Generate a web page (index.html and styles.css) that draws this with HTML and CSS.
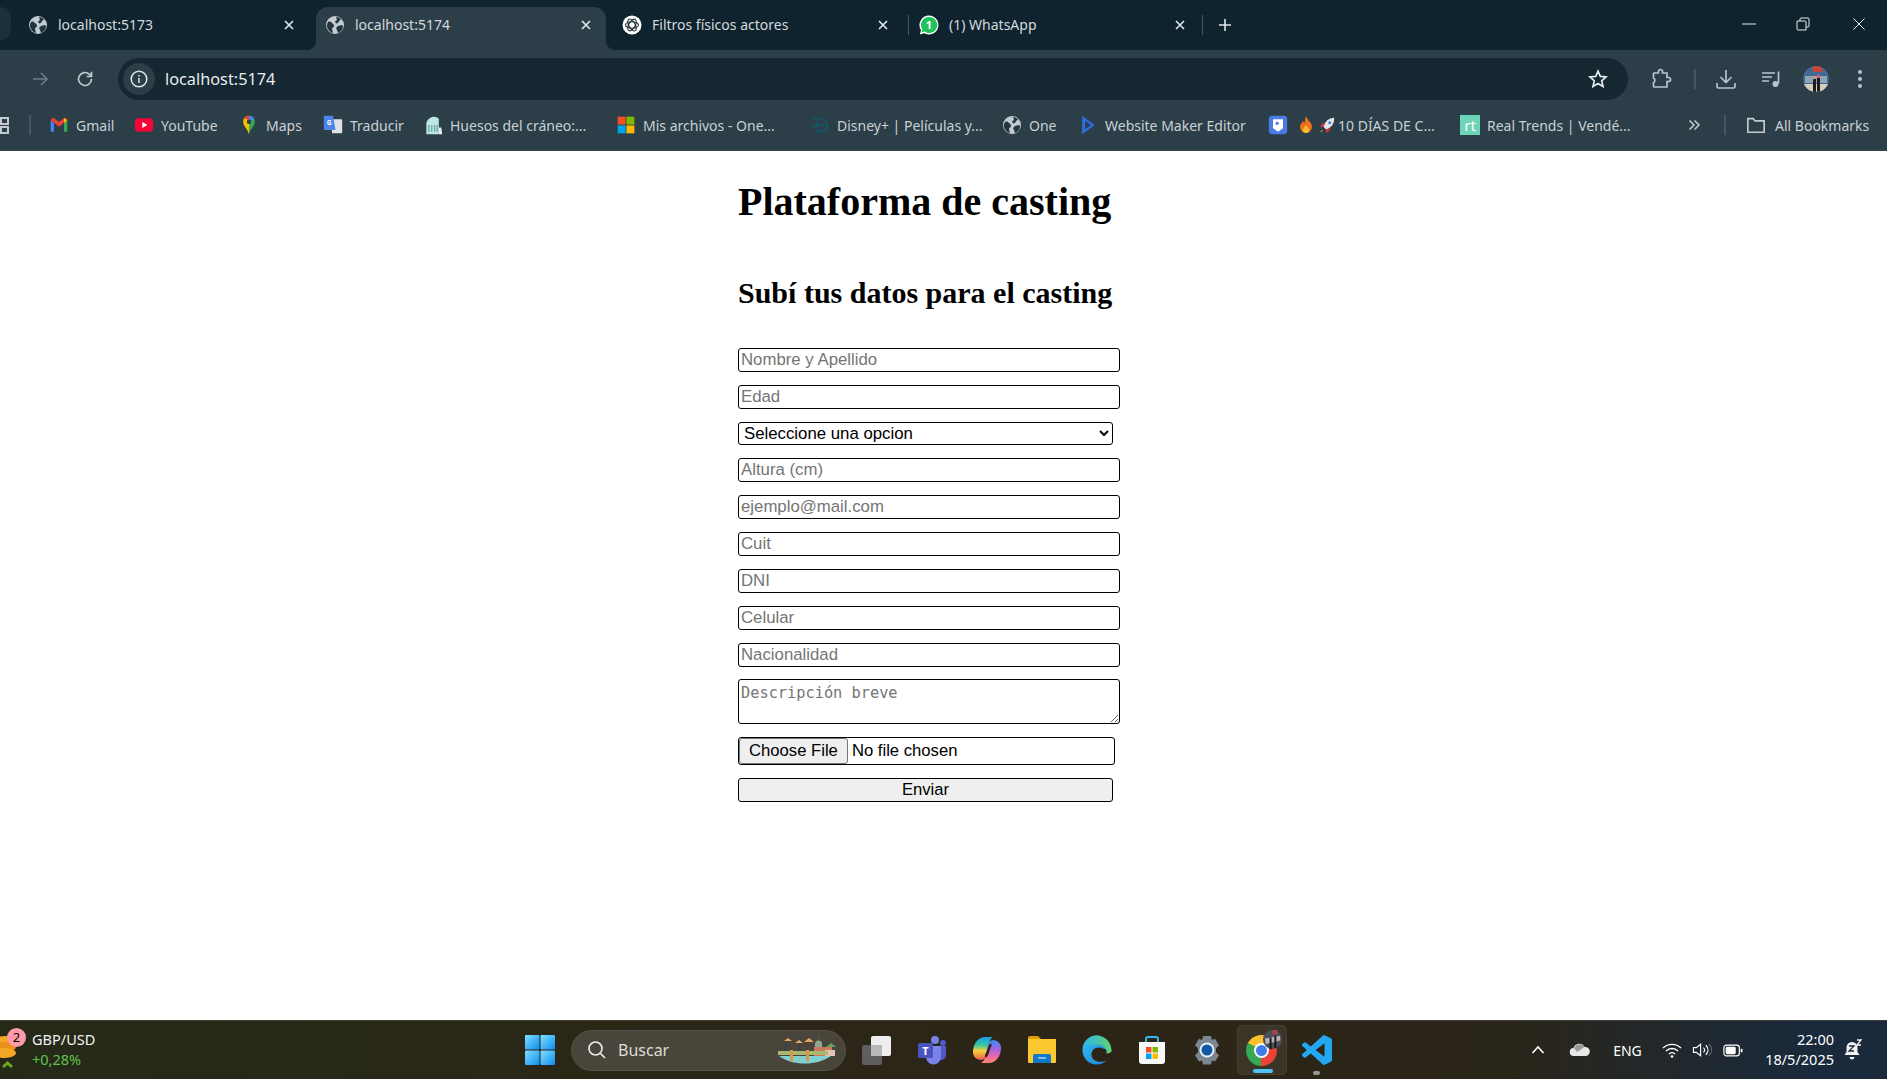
FILE: index.html
```html
<!DOCTYPE html>
<html lang="es">
<head>
<meta charset="utf-8">
<title>Plataforma de casting</title>
<link rel="stylesheet" href="styles.css">
</head>
<body>
<svg class="defs" width="0" height="0" aria-hidden="true">
  <defs>
    <symbol id="globe" viewBox="0 0 20 20">
      <circle cx="10" cy="10" r="9" fill="#c3cbd0"/>
      <path d="M3 7c2-1 3 0 4 1s2 1 2 3-2 1-2 3l1 4c-3-.6-5-3-6-6-.3-2 0-3 1-5zM11 2c2 0 4 1 5 2.500l-2 1.500-1 2-2 .5-1-2 2-1.500zM13 11l4-1 1 1c0 3-2 6-5 7l-1-3-1-2z" fill="#23363f"/>
    </symbol>
    <linearGradient id="edgeA" x1="0" y1="0" x2="1" y2="1"><stop offset="0" stop-color="#35c1f1"/><stop offset="1" stop-color="#1b7ed6"/></linearGradient>
    <linearGradient id="edgeB" x1="0" y1="0" x2="1" y2="0"><stop offset="0" stop-color="#2fb5e8"/><stop offset="1" stop-color="#5fd36f"/></linearGradient>
    <linearGradient id="copi" x1="0" y1="0" x2="0" y2="1"><stop offset="0" stop-color="#1d9be8"/><stop offset=".35" stop-color="#35c8a0"/><stop offset=".6" stop-color="#f7d03b"/><stop offset=".85" stop-color="#f28a3a"/><stop offset="1" stop-color="#ee4f5f"/></linearGradient>
    <linearGradient id="copi2" x1="0" y1="0" x2="0" y2="1"><stop offset="0" stop-color="#2f8ef0"/><stop offset=".4" stop-color="#a862e4"/><stop offset=".75" stop-color="#f06aa0"/><stop offset="1" stop-color="#f58a6a"/></linearGradient>
    <linearGradient id="win" x1="0" y1="0" x2="1" y2="1"><stop offset="0" stop-color="#7fe0ff"/><stop offset="1" stop-color="#0d8df0"/></linearGradient>
  </defs>
</svg>

<header class="tabstrip">
  <div class="tab-stub"></div>
  <div class="tabs">
    <div class="tab">
      <svg class="favicon" viewBox="0 0 20 20"><use href="#globe"/></svg>
      <span class="tab-title">localhost:5173</span>
      <svg class="tab-close" viewBox="0 0 12 12"><path d="M2 2l8 8M10 2l-8 8"/></svg>
    </div>
    <div class="tab tab-active">
      <svg class="favicon" viewBox="0 0 20 20"><use href="#globe"/></svg>
      <span class="tab-title">localhost:5174</span>
      <svg class="tab-close" viewBox="0 0 12 12"><path d="M2 2l8 8M10 2l-8 8"/></svg>
    </div>
    <div class="tab">
      <svg class="favicon" viewBox="0 0 20 20">
        <circle cx="10" cy="10" r="9.500" fill="#fff"/>
        <g fill="none" stroke="#1a2a30" stroke-width="1.100">
          <ellipse cx="10" cy="10" rx="6.500" ry="3.200"/>
          <ellipse cx="10" cy="10" rx="6.500" ry="3.200" transform="rotate(60 10 10)"/>
          <ellipse cx="10" cy="10" rx="6.500" ry="3.200" transform="rotate(120 10 10)"/>
        </g>
      </svg>
      <span class="tab-title">Filtros físicos actores</span>
      <svg class="tab-close" viewBox="0 0 12 12"><path d="M2 2l8 8M10 2l-8 8"/></svg>
    </div>
    <div class="tab tab-sep">
      <svg class="favicon" viewBox="0 0 20 20">
        <path d="M10 .5a9.500 9.500 0 0 0-8 14.600L.8 19.500l4.500-1.200A9.500 9.500 0 1 0 10 .5z" fill="#fff"/>
        <path d="M10 2a8 8 0 0 0-6.700 12.300l-.7 3 3-.8A8 8 0 1 0 10 2z" fill="#1fc35a"/>
        <text x="10" y="14" class="wa-count">1</text>
      </svg>
      <span class="tab-title">(1) WhatsApp</span>
      <svg class="tab-close" viewBox="0 0 12 12"><path d="M2 2l8 8M10 2l-8 8"/></svg>
    </div>
  </div>
  <svg class="new-tab" viewBox="0 0 14 14"><path d="M7 1v12M1 7h12"/></svg>
  <div class="win-controls">
    <svg class="wc-min" viewBox="0 0 14 12"><path d="M0 6h14"/></svg>
    <svg class="wc-max" viewBox="0 0 14 14"><path d="M1 4h8a1 1 0 0 1 1 1v8H2a1 1 0 0 1-1-1zM4 4V2a1 1 0 0 1 1-1h7a1 1 0 0 1 1 1v7a1 1 0 0 1-1 1h-2"/></svg>
    <svg class="wc-close" viewBox="0 0 12 12"><path d="M.5.5l11 11M11.500.5l-11 11"/></svg>
  </div>
</header>

<nav class="toolbar">
  <svg class="nav-back" viewBox="0 0 20 20"><path d="M17 10H3M9 4l-6 6 6 6"/></svg>
  <svg class="nav-forward" viewBox="0 0 20 20"><path d="M3 10h14M11 4l6 6-6 6"/></svg>
  <svg class="nav-reload" viewBox="0 0 20 20"><path d="M16.500 10a6.500 6.500 0 1 1-2-4.700L16.500 7.500M16.500 2.800v4.700h-4.700"/></svg>
  <div class="omnibox">
    <span class="site-info"><svg viewBox="0 0 20 20"><circle cx="10" cy="10" r="7.800"/><path d="M10 9v5M10 6v1.400"/></svg></span>
    <span class="url">localhost:5174</span>
    <svg class="star" viewBox="0 0 20 20"><path d="M10 2.200l2.300 5.200 5.700.6-4.300 3.800 1.300 5.600-5-3-5 3 1.300-5.600L2 8l5.700-.6z"/></svg>
  </div>
  <div class="tool-icons">
    <svg class="ti-ext" viewBox="0 0 22 22"><path d="M4 5h4.500V3.500a2 2 0 0 1 4 0V5H17v4.500h1.500a2 2 0 0 1 0 4H17V19H4.500a1 1 0 0 1-1-1v-3.500a2.500 2.500 0 0 0 0-4.500V6a1 1 0 0 1 .5-1z"/></svg>
    <span class="ti-sep"></span>
    <svg class="ti-dl" viewBox="0 0 22 22"><path d="M11 2v12M5.500 9l5.500 5.500L16.500 9M2 15v3.500a1.500 1.500 0 0 0 1.500 1.500h15a1.500 1.500 0 0 0 1.500-1.500V15"/></svg>
    <svg class="ti-media" viewBox="0 0 22 22"><path d="M2 5h13M2 9h10M2 13h7M18.500 3.500v12"/><circle class="ti-fill" cx="15.500" cy="16" r="3"/></svg>
    <svg class="ti-avatar" viewBox="0 0 26 26">
      <clipPath id="avc"><circle cx="13" cy="13" r="13"/></clipPath>
      <g clip-path="url(#avc)">
        <rect width="26" height="26" fill="#3f6a96"/>
        <rect y="18" width="26" height="8" fill="#d7cdb8"/>
        <rect x="2" y="10" width="22" height="7" fill="#8ea2b2"/>
        <path d="M9 0h9l2 6H10z" fill="#c8453a"/>
        <path d="M10 13h3v13h-3zM14 12h3v14h-3z" fill="#1d1a24"/>
        <circle cx="11.500" cy="11.500" r="1.800" fill="#c59a80"/>
        <circle cx="15.500" cy="10" r="1.800" fill="#c55f70"/>
      </g>
    </svg>
    <svg class="ti-menu" viewBox="0 0 6 22"><circle cx="3" cy="4" r="2"/><circle cx="3" cy="11" r="2"/><circle cx="3" cy="18" r="2"/></svg>
  </div>
</nav>

<nav class="bookmarks">
  <svg class="bm-apps" viewBox="0 0 10 20"><path d="M1 3h7v6H1zM1 12h7v6H1z"/></svg>
  <span class="bm-sep"></span>
  <a class="bm"><svg viewBox="0 0 24 24"><path d="M2 6v14h4V10z" fill="#4285f4"/><path d="M22 6v14h-4V10z" fill="#34a853"/><path d="M2 6l10 8 10-8-3-3-7 5.500L5 3z" fill="#ea4335"/><path d="M22 6l-4 4V4z" fill="#fbbc04"/></svg><span>Gmail</span></a>
  <a class="bm"><svg viewBox="0 0 24 24"><rect x="1" y="4" width="22" height="16" rx="4.500" fill="#f5053a"/><path d="M10 8.500l6 3.500-6 3.500z" fill="#fff"/></svg><span>YouTube</span></a>
  <a class="bm"><svg viewBox="0 0 24 24"><path d="M12 1C7.500 1 5 4.500 5 8c0 5 5 8 7 15z" fill="#fbbc04"/><path d="M12 1c4.500 0 7 3.500 7 7 0 5-5 8-7 15z" fill="#34a853"/><path d="M6 4c1.500-2 3.500-3 6-3v5z" fill="#ea4335"/><path d="M12 1c3 0 5 1.500 6 3.500L12 8z" fill="#4285f4"/><circle cx="12" cy="8" r="2.700" fill="#2c3e48"/></svg><span>Maps</span></a>
  <a class="bm"><svg viewBox="0 0 24 24"><path d="M9 5h13a1 1 0 0 1 1 1v15a1 1 0 0 1-1 1H11z" fill="#dfe3e6"/><path d="M2 1h10l3 17H2a1 1 0 0 1-1-1V2a1 1 0 0 1 1-1z" fill="#4d86e8"/><text x="7.500" y="12" class="bm-g">G</text></svg><span>Traducir</span></a>
  <a class="bm"><svg viewBox="0 0 24 24"><path d="M4 23V11a9 9 0 0 1 15 -6.500V23z" fill="#bfe6e4"/><path d="M7 12v8M10.500 12v8M14 12v8M17 12v8" stroke="#6aa6a6" stroke-width="1.600"/><path d="M19 15h3l1 8h-4z" fill="#e6f2f2"/></svg><span>Huesos del cráneo:...</span></a>
  <a class="bm"><svg viewBox="0 0 24 24"><rect x="2" y="2" width="9.500" height="9.500" fill="#f25022"/><rect x="12.500" y="2" width="9.500" height="9.500" fill="#7fba00"/><rect x="2" y="12.500" width="9.500" height="9.500" fill="#00a4ef"/><rect x="12.500" y="12.500" width="9.500" height="9.500" fill="#ffb900"/></svg><span>Mis archivos - One...</span></a>
  <a class="bm"><svg viewBox="0 0 24 24" fill="none" stroke="#0e5c6e" stroke-width="1.700"><path d="M3 5c8-3 18 0 18 8 0 5-6 7-11 7"/><path d="M9 7v14M2 15c3-3 8-4 18-3"/></svg><span>Disney+ | Películas y...</span></a>
  <a class="bm"><svg viewBox="0 0 20 20"><use href="#globe"/></svg><span>One</span></a>
  <a class="bm"><svg viewBox="0 0 24 24"><path d="M5 1l15 11L5 23z" fill="#2d6fe0"/><path d="M8.500 7l7 5-7 5z" fill="#2c3e48"/></svg><span>Website Maker Editor</span></a>
  <a class="bm bm-dias"><svg viewBox="0 0 24 24"><rect x="1" y="1" width="22" height="22" rx="4" fill="#4a7be4"/><path d="M6 5h12v11l-6 4-6-4z" fill="#fff"/><circle cx="11" cy="10" r="2" fill="#4a7be4"/></svg><svg class="emoji" viewBox="0 0 16 20"><path d="M8 1c1 4 6 6 6 11a6 6 0 0 1-12 0c0-3 2-4 3-6 1 1 1 2 1.500 2C7 6 7 3 8 1z" fill="#f0701f"/><path d="M8 10c.5 2 3 3 3 5a3 3 0 0 1-6 0c0-2 2-3 3-5z" fill="#fbc02d"/></svg><svg class="emoji" viewBox="0 0 20 20"><path d="M18 2c-6 0-10 4-12 10l3 3c6-2 9-6 9-13z" fill="#e8e4ea"/><circle cx="13" cy="7.500" r="1.800" fill="#3b8bd0"/><path d="M6 12H2l3-4h3zM9 15v4l4-3v-3z" fill="#d73a3a"/><path d="M5 15l-3 3 3-1z" fill="#f09a2a"/></svg><span>10 DÍAS DE C...</span></a>
  <a class="bm"><span class="rt">rt</span><span>Real Trends | Vendé...</span></a>
  <svg class="bm-more" viewBox="0 0 14 14"><path d="M2.500 2.500L7 7l-4.500 4.500M7.500 2.500L12 7l-4.500 4.500"/></svg>
  <span class="bm-sep"></span>
  <a class="bm bm-all"><svg class="bm-folder" viewBox="0 0 22 20"><path d="M2 3h6l2 2.500h10V18H2z"/></svg><span>All Bookmarks</span></a>
</nav>

<main class="page">
  <div class="content">
    <h1>Plataforma de casting</h1>
    <h2>Subí tus datos para el casting</h2>
    <form class="casting-form">
      <input class="field" type="text" placeholder="Nombre y Apellido">
      <input class="field" type="text" placeholder="Edad">
      <select class="choice"><option>Seleccione una opcion</option></select>
      <input class="field" type="text" placeholder="Altura (cm)">
      <input class="field" type="text" placeholder="ejemplo@mail.com">
      <input class="field" type="text" placeholder="Cuit">
      <input class="field" type="text" placeholder="DNI">
      <input class="field" type="text" placeholder="Celular">
      <input class="field" type="text" placeholder="Nacionalidad">
      <textarea class="area" placeholder="Descripción breve"></textarea>
      <input class="file" type="file">
      <button class="send" type="button">Enviar</button>
    </form>
  </div>
</main>

<footer class="taskbar">
  <div class="widget">
    <svg class="coin" viewBox="0 0 16 36"><ellipse cx="5" cy="8" rx="11" ry="5" fill="#f5a623"/><ellipse cx="5" cy="14" rx="11" ry="5" fill="#ec8f1c"/><ellipse cx="5" cy="20" rx="11" ry="5" fill="#f5a623"/><path d="M3 34l4.500-4 4.500 4" fill="none" stroke="#6fa51e" stroke-width="3"/></svg>
    <span class="badge">2</span>
    <div class="widget-text"><span class="pair">GBP/USD</span><span class="change">+0,28%</span></div>
  </div>
  <div class="start"><svg viewBox="0 0 30 30"><g fill="url(#win)"><rect x="0" y="0" width="14.500" height="14.500" rx="1"/><rect x="15.500" y="0" width="14.500" height="14.500" rx="1"/><rect x="0" y="15.500" width="14.500" height="14.500" rx="1"/><rect x="15.500" y="15.500" width="14.500" height="14.500" rx="1"/></g></svg></div>
  <div class="search">
    <svg class="search-icon" viewBox="0 0 20 20"><circle cx="8.500" cy="8.500" r="6.500"/><path d="M13.500 13.500L18 18"/></svg>
    <span class="search-text">Buscar</span>
    <svg class="search-art" viewBox="0 0 58 30">
      <path d="M6 6l4-3 4 3zM17 8l4-3 4 3zM26 7l5-4 5 4z" fill="#e8a765"/>
      <path d="M8 6v12M21 8v10" stroke="#33424a" stroke-width="1.200"/>
      <path d="M37 19V9a3.500 3.500 0 0 1 7 0v10z" fill="#8fa88c"/>
      <path d="M40 5V0h1v5z" fill="#4a5a52"/>
      <rect x="36" y="12" width="18" height="9" fill="#c9795e"/>
      <path d="M48 12l5-4 5 4z" fill="#5fa65a"/>
      <rect x="47" y="15" width="10" height="6" fill="#e8c3b5"/>
      <rect x="0" y="16" width="50" height="4" fill="#a9b86f"/>
      <path d="M1 21c13 10 38 10 52 0z" fill="#7fd0cf"/>
      <rect x="12" y="15" width="3" height="11" fill="#d8964e"/>
      <rect x="28" y="15" width="3" height="11" fill="#d8964e"/>
    </svg>
  </div>
  <div class="apps">
    <span class="app"><svg viewBox="0 0 30 30"><rect x="9" y="1" width="20" height="20" rx="2" fill="#eee"/><rect x="0" y="10" width="20" height="20" rx="2" fill="#5f5f5f"/><rect x="9" y="10" width="11" height="11" fill="#b9b9b9"/></svg></span>
    <span class="app"><svg viewBox="0 0 30 30"><circle cx="18" cy="5" r="4" fill="#7b83eb"/><circle cx="26" cy="8" r="3" fill="#5059c9"/><path d="M20 11h9v9a5 5 0 0 1-8 4z" fill="#5059c9"/><path d="M9 11h15v11a7.500 7.500 0 0 1-15 0z" fill="#7b83eb"/><rect x="1" y="8" width="15" height="15" rx="1.500" fill="#4b53bc"/><text x="8.500" y="20" class="teams-t">T</text></svg></span>
    <span class="app"><svg viewBox="0 0 30 30"><path d="M21 2c-3 1-5 8-6 14-1 6-3 9-6 9-4 0-8-3-8-8C1 9 6 2 13 2z" fill="url(#copi)"/><path d="M9 28c3-1 5-8 6-14 1-6 3-9 6-9 4 0 8 3 8 8 0 8-5 15-12 15z" fill="url(#copi2)"/><path d="M18.500 10c-2 3-2 7-4.500 11" fill="none" stroke="#2b2517" stroke-width="2.500" stroke-linecap="round"/></svg></span>
    <span class="app"><svg viewBox="0 0 30 30"><path d="M1 3a2 2 0 0 1 2-2h8l3 3h-13z" fill="#d9a008"/><path d="M1 4h28v23a1 1 0 0 1-1 1H2a1 1 0 0 1-1-1z" fill="#fdc82f"/><path d="M6 28v-7a2 2 0 0 1 2-2h14a2 2 0 0 1 2 2v7z" fill="#0f78c9"/><path d="M11 23h8" stroke="#bfe3ff" stroke-width="1.300"/></svg></span>
    <span class="app"><svg viewBox="0 0 30 30"><path d="M29.500 17C29 7 22 .5 14.500.5 6.500.5.500 7 .5 15c0 8 6 14.500 14 14.500 4 0 7.500-1.500 10-4-6 3-15 1-15-6 0-4 3-7 7-7 3 0 5 1 13 4.500z" fill="url(#edgeA)"/><path d="M1 12C3 5 8 .5 14.500.5c8 0 15 6.500 15 15 0 2-2 3-5 3 1-5-3-9-9-9-6 0-12 1-14.500 2.500z" fill="url(#edgeB)"/></svg></span>
    <span class="app"><svg viewBox="0 0 30 30"><path d="M9 8V4a2 2 0 0 1 2-2h8a2 2 0 0 1 2 2v4" fill="none" stroke="#35b6f0" stroke-width="2"/><path d="M2 7h26v19a3 3 0 0 1-3 3H5a3 3 0 0 1-3-3z" fill="#f8f8f8"/><rect x="9" y="12" width="5.500" height="5.500" fill="#f25022"/><rect x="15.500" y="12" width="5.500" height="5.500" fill="#7fba00"/><rect x="9" y="18.500" width="5.500" height="5.500" fill="#00a4ef"/><rect x="15.500" y="18.500" width="5.500" height="5.500" fill="#ffb900"/></svg></span>
    <span class="app"><svg viewBox="0 0 30 30"><path d="M11 1h8l1 4 3-1.200 4 6.400-3 3v4l3 3-4 6.400-3-1.200-1 4h-8l-1-4-3 1.200-4-6.400 3-3v-4l-3-3 4-6.400L10 5z" fill="#7b8790"/><circle cx="15" cy="15" r="7.500" fill="#e8eef2"/><circle cx="15" cy="15" r="5.500" fill="#0f5aa8"/></svg></span>
    <span class="app app-active">
      <span class="chrome"><span class="chrome-core"></span></span>
      <svg class="chrome-av" viewBox="0 0 20 20"><circle cx="10" cy="10" r="10" fill="#4a4f58"/><path d="M2 9l16-3v5L3 15z" fill="#b8b3b5"/><path d="M7 8h2v12H7zM12 6h2v13h-2z" fill="#16161c"/><path d="M10 0h5l1 4-6 1z" fill="#a6424a"/></svg>
      <span class="running"></span>
    </span>
    <span class="app"><svg viewBox="0 0 24 24"><path d="M23.150 2.587L18.210.21a1.494 1.494 0 0 0-1.705.29l-9.460 8.630-4.120-3.128a.999.999 0 0 0-1.276.057L.327 7.261A1 1 0 0 0 .326 8.740L3.899 12 .326 15.260a1 1 0 0 0 .001 1.479L1.650 17.940a.999.999 0 0 0 1.276.057l4.120-3.128 9.460 8.630a1.492 1.492 0 0 0 1.704.290l4.942-2.377A1.500 1.500 0 0 0 24 20.060V3.939a1.500 1.500 0 0 0-.850-1.352zm-5.146 14.861L10.826 12l7.178-5.448v10.896z" fill="#22a7f0"/></svg><span class="open-dot"></span></span>
  </div>
  <div class="tray">
    <svg class="t-chev" viewBox="0 0 14 10"><path d="M1.500 8L7 2l5.500 6"/></svg>
    <svg class="t-cloud" viewBox="0 0 22 14"><path d="M5 13a4 4 0 0 1-.5-8A6 6 0 0 1 15.500 4 4.500 4.500 0 0 1 17 13z" fill="#e9e9e9"/><path d="M5 5a6 6 0 0 1 10.500-1L8 9z" fill="#9a9a98"/></svg>
    <span class="t-eng">ENG</span>
    <svg class="t-wifi" viewBox="0 0 20 16"><path d="M1 6a13 13 0 0 1 18 0M4 9a8.500 8.500 0 0 1 12 0M7 12a4 4 0 0 1 6 0"/><circle cx="10" cy="14.500" r="1.300" fill="#fff" stroke="none"/></svg>
    <svg class="t-vol" viewBox="0 0 22 16"><path d="M1.500 5.500h3L9 2v12l-4.500-3.500h-3zM12 5.500c1.500 1.500 1.500 3.500 0 5M14.500 3c3 3 3 7 0 10"/><path class="t-vol-dim" d="M17.500 1.500c4 4 4 9 0 13"/></svg>
    <svg class="t-batt" viewBox="0 0 22 14"><rect x="1" y="1" width="17" height="12" rx="3" fill="none" stroke="#fff" stroke-width="1.300"/><rect x="3" y="3" width="11" height="8" rx="1.500" fill="#fff"/><path d="M19.500 5h1a1 1 0 0 1 1 1v2a1 1 0 0 1-1 1h-1z" fill="#fff"/></svg>
    <div class="clock"><span>22:00</span><span>18/5/2025</span></div>
    <svg class="t-bell" viewBox="0 0 20 22"><path d="M9 3a5.500 5.500 0 0 0-5.500 5.500V13L1.500 16h15l-2-3V8.500A5.500 5.500 0 0 0 9 3z" fill="#f2f2f2"/><path d="M6.500 18h5a2.500 2.500 0 0 1-5 0z" fill="#f2f2f2"/><path d="M6 7h5l-5 5h5" fill="none" stroke="#1d2a35" stroke-width="1.300"/><path d="M14 1h4l-4 5h4" fill="none" stroke="#f2f2f2" stroke-width="1.300"/></svg>
  </div>
</footer>
</body>
</html>
```

FILE: styles.css
```css
* { box-sizing: border-box; }
html, body { height: 100%; }
body {
  margin: 0;
  display: flex;
  flex-direction: column;
  height: 100vh;
  overflow: hidden;
  background: #fff;
  font-family: "Liberation Serif", serif;
}
.defs { position: absolute; }
svg { display: block; flex: none; }

/* tab strip */
.tabstrip {
  height: 50px;
  flex: none;
  display: flex;
  align-items: flex-end;
  background: #0e232d;
  font: 14px "Noto Sans", sans-serif;
  color: #d3d9dd;
}
.tab-stub {
  width: 11px;
  height: 33px;
  flex: none;
  background: #1c3039;
  border-radius: 0 10px 10px 0;
  align-self: flex-start;
  margin-top: 7px;
}
.tabs {
  display: grid;
  grid-template-columns: repeat(4, 290px);
  column-gap: 7px;
  margin-left: 8px;
}
.tab {
  position: relative;
  height: 43px;
  padding: 0 0 8px 9px;
  display: flex;
  align-items: center;
}
.tab-active {
  background: #2c3e48;
  border-radius: 12px 12px 0 0;
}
.tab-active::before,
.tab-active::after {
  content: "";
  position: absolute;
  bottom: 0;
  width: 10px;
  height: 10px;
}
.tab-active::before {
  left: -10px;
  background: radial-gradient(circle at 0 0, transparent 10px, #2c3e48 10.500px);
}
.tab-active::after {
  right: -10px;
  background: radial-gradient(circle at 100% 0, transparent 10px, #2c3e48 10.500px);
}
.tab-sep::before,
.tab-sep::after {
  content: "";
  position: absolute;
  width: 1px;
  height: 20px;
  top: 8px;
  background: #47565e;
}
.tab-sep::before { left: -2px; }
.tab-sep::after { right: -3px; }
.favicon { width: 20px; height: 20px; }
.wa-count {
  font: 700 11px "Noto Sans", sans-serif;
  fill: #fff;
  text-anchor: middle;
}
.tab-title {
  flex: 1;
  margin-left: 10px;
  white-space: nowrap;
}
.tab-close {
  width: 12px;
  height: 12px;
  margin-right: 14px;
  fill: none;
  stroke: #e4e8ea;
  stroke-width: 1.600;
}
.new-tab {
  width: 14px;
  height: 14px;
  margin: 0 0 18px 18px;
  fill: none;
  stroke: #e4e8ea;
  stroke-width: 1.600;
}
.win-controls {
  margin-left: auto;
  display: flex;
  gap: 40px;
  align-items: center;
  align-self: flex-start;
  height: 48px;
  padding-right: 22px;
}
.win-controls svg {
  fill: none;
  stroke: #e8ecee;
  stroke-width: 1;
}
.wc-min { width: 14px; height: 12px; }
.wc-close { width: 12px; height: 12px; margin-left: 3px; }
.wc-max { width: 14px; height: 14px; }

/* toolbar */
.toolbar {
  height: 50px;
  flex: none;
  background: #2c3e48;
  display: flex;
  align-items: center;
  padding-top: 8px;
}
.toolbar svg { fill: none; stroke-width: 1.700; }
.nav-back { width: 20px; height: 20px; margin-left: -17px; stroke: #c3cbd0; }
.nav-forward { width: 20px; height: 20px; margin-left: 27px; stroke: #6c7b84; }
.nav-reload { width: 20px; height: 20px; margin-left: 25px; stroke: #c3cbd0; }
.omnibox {
  width: 1510px;
  height: 42px;
  margin-left: 23px;
  padding: 0 20px 0 5px;
  border-radius: 21px;
  background: #152731;
  display: flex;
  align-items: center;
}
.site-info {
  width: 32px;
  height: 32px;
  border-radius: 50%;
  background: #2c3e48;
  display: flex;
  align-items: center;
  justify-content: center;
}
.site-info svg { width: 20px; height: 20px; stroke: #e1e6e9; stroke-width: 1.500; }
.url {
  margin-left: 10px;
  flex: 1;
  font: 16.300px "Noto Sans", sans-serif;
  color: #e8ecee;
}
.star { width: 20px; height: 20px; stroke: #e4e9ec; }
.tool-icons {
  display: flex;
  align-items: center;
  margin-left: 22px;
}
.ti-ext { width: 22px; height: 22px; stroke: #b4c6d1; }
.ti-sep { width: 2px; height: 20px; margin-left: 22px; background: #46565f; }
.ti-dl { width: 22px; height: 22px; margin-left: 19px; stroke: #b4c6d1; }
.ti-media { width: 22px; height: 22px; margin-left: 23px; stroke: #b4c6d1; }
.toolbar .ti-fill { fill: #b4c6d1; stroke: none; }
.ti-avatar { width: 26px; height: 26px; margin-left: 21px; }
.toolbar .ti-menu { width: 6px; height: 22px; margin-left: 28px; fill: #b4c6d1; stroke: none; }

/* bookmarks */
.bookmarks {
  height: 51px;
  flex: none;
  background: #2c3e48;
  border-bottom: 1px solid #3a4a53;
  display: grid;
  grid-template-columns: 29px 20px 85px 105px 84px 100px 193px 194px 192px 76px 190px 192px 227px 37px 22px 1fr;
  align-items: center;
  font: 14px "Noto Sans", sans-serif;
  color: #c9d1d6;
}
.bm-apps { width: 10px; height: 20px; fill: none; stroke: #c3cbd0; stroke-width: 2; }
.bm-sep { width: 2px; height: 20px; background: #46565f; }
.bm { display: flex; align-items: center; gap: 7px; white-space: nowrap; }
.bm svg { width: 20px; height: 20px; }
.bm svg.emoji { width: 18px; height: 20px; margin-right: -4px; }
.bm-dias svg:first-child { margin-right: 2px; }
.bm-dias span { margin-left: -1px; }
.bm-g { font: 700 8px "Noto Sans", sans-serif; fill: #fff; text-anchor: middle; }
.rt {
  width: 20px;
  height: 20px;
  background: #6dd4b8;
  color: #fff;
  font-size: 15px;
  line-height: 20px;
  text-align: center;
}
.bm-more { width: 14px; height: 14px; fill: none; stroke: #c3cbd0; stroke-width: 1.500; }
.bm-all { gap: 9px; }
.bm-all svg.bm-folder { fill: none; stroke: #c3cbd0; stroke-width: 1.800; }

/* page */
.page {
  flex: 1;
  display: flex;
  justify-content: center;
  color: #000;
}
.content { width: 411px; }
h1 { margin: 28px 0 0; font-size: 40px; font-weight: 700; line-height: 46px; }
h2 { margin: 51px 0 0; font-size: 30px; font-weight: 700; line-height: 34px; }
.casting-form {
  margin-top: 38px;
  display: flex;
  flex-direction: column;
  align-items: flex-start;
  gap: 13px;
}
.field, .choice, .area, .file, .send {
  font: 16.800px "Liberation Sans", sans-serif;
  border: 1px solid #000;
  border-radius: 3px;
  background: #fff;
  color: #000;
}
.field { width: 382px; height: 24px; padding: 0 2px; }
.choice { width: 375px; height: 22.500px; padding: 0 0 0 1px; }
.area {
  width: 382px;
  height: 45px;
  margin-top: -0.500px;
  padding: 4px 2px 2px;
  font: 15.300px "DejaVu Sans Mono", monospace;
  display: block;
}
.file { width: 377px; height: 28px; padding: 0; font-size: 16.670px; }
.file::file-selector-button {
  height: 26px;
  margin-right: 4px;
  padding: 0 9px;
  font: inherit;
  color: #000;
  background: #efefef;
  border: 1px solid #767676;
  border-radius: 3px;
}
.send { width: 375px; height: 24px; padding: 0; background: #efefef; font-size: 16.670px; }

/* taskbar */
.taskbar {
  height: 59px;
  flex: none;
  display: flex;
  align-items: center;
  border-top: 1px solid #3d3d38;
  background: linear-gradient(90deg, #252a18 0%, #2a2717 30%, #2c2517 60%, #2a2519 80%, #1a2a3c 96%, #1a2a3c 100%);
  color: #fff;
  font: 14.500px "Noto Sans", sans-serif;
}
.widget {
  position: relative;
  width: 515px;
  height: 58px;
  flex: none;
  display: flex;
  align-items: center;
  padding-left: 32px;
}
.coin { position: absolute; left: 0; top: 12px; width: 16px; height: 36px; }
.badge {
  position: absolute;
  left: 7px;
  top: 7px;
  width: 19px;
  height: 19px;
  border-radius: 50%;
  background: #ff9aa8;
  color: #000;
  font-size: 13px;
  line-height: 19px;
  text-align: center;
}
.widget-text { display: flex; flex-direction: column; line-height: 20px; margin-bottom: 2px; }
.pair { color: #f2f2f2; }
.change { color: #5fc24a; }
.start { width: 50px; display: flex; justify-content: center; }
.start svg { width: 30px; height: 30px; }
.search {
  width: 275px;
  height: 41px;
  margin-left: 6px;
  padding: 0 9px 0 15px;
  flex: none;
  display: flex;
  align-items: center;
  border-radius: 21px;
  background: #49453a;
  border: 1px solid #55514a;
}
.search-icon { width: 20px; height: 20px; fill: none; stroke: #eee; stroke-width: 1.600; }
.search-text { flex: 1; margin-left: 11px; font-size: 16px; color: #dcdcd8; }
.search-art { width: 58px; height: 30px; }
.apps { display: flex; margin-left: 3px; }
.app {
  position: relative;
  width: 55px;
  height: 50px;
  display: flex;
  align-items: center;
  justify-content: center;
}
.app svg { width: 30px; height: 30px; }
.app-active {
  background: #3a3527;
  border: 1px solid #44402f;
  border-radius: 5px;
  width: 50px;
  margin: 0 2.500px;
}
.chrome {
  width: 31px;
  height: 31px;
  border-radius: 50%;
  background: conic-gradient(from 60deg, #ea4335 0 120deg, #34a853 120deg 240deg, #fbc02d 240deg 360deg);
  display: flex;
  align-items: center;
  justify-content: center;
}
.chrome-core {
  width: 15px;
  height: 15px;
  border-radius: 50%;
  background: #3f7ee8;
  border: 2px solid #fff;
}
.app svg.chrome-av { position: absolute; right: 4px; top: 4px; width: 19px; height: 19px; }
.running {
  position: absolute;
  bottom: 1px;
  left: 15px;
  width: 20px;
  height: 4px;
  border-radius: 2px;
  background: #4fc3f7;
}
.open-dot {
  position: absolute;
  bottom: 0;
  left: 24px;
  width: 7px;
  height: 4px;
  border-radius: 2px;
  background: #98968f;
}
.tray {
  margin-left: auto;
  width: 372px;
  padding-right: 15px;
  display: grid;
  grid-template-columns: 45px 40px 55px 33px 28px 34px 84px 38px;
  align-items: center;
  justify-items: center;
}
.t-chev { width: 14px; height: 10px; fill: none; stroke: #fff; stroke-width: 1.600; }
.t-cloud { width: 22px; height: 14px; }
.t-eng { font-size: 14px; }
.t-wifi { width: 20px; height: 16px; fill: none; stroke: #fff; stroke-width: 1.400; }
.t-vol { width: 21px; height: 16px; fill: none; stroke: #fff; stroke-width: 1.200; }
.t-vol-dim { stroke: #6b6b66; }
.t-batt { width: 20px; height: 13px; }
.clock {
  justify-self: end;
  display: flex;
  flex-direction: column;
  align-items: flex-end;
  line-height: 20px;
  margin-bottom: 2px;
}
.t-bell { width: 20px; height: 22px; }
.teams-t { font: 700 11px "Noto Sans", sans-serif; fill: #fff; text-anchor: middle; }
```
